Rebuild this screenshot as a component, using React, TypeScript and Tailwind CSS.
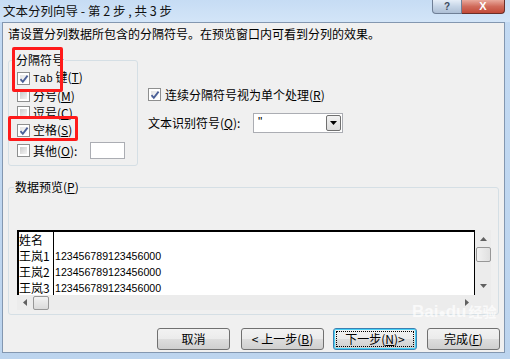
import React from "react";

// ─── Small pieces ─────────────────────────────────────────────────────────────

function CheckBox({ on }: { on?: boolean }) {
  return (
    <span className="relative w-[13px] h-[13px] shrink-0 border border-[#8e8f8f] bg-white p-[2px] flex">
      <span
        className={
          on
            ? "flex-1 bg-gradient-to-br from-[#e4e4e4] to-[#fbfbfb]"
            : "flex-1 bg-gradient-to-br from-[#cbcbcb] to-[#f4f4f4]"
        }
      />
      {on && (
        <svg className="absolute left-[1px] top-[1px]" width="10" height="10" viewBox="0 0 10 10">
          <path d="M1.5 5.2 L3.8 7.8 L8.6 1.6" fill="none" stroke="#4a5f97" strokeWidth="1.8" />
        </svg>
      )}
    </span>
  );
}

function Key({ k }: { k: string }) {
  return (
    <span>
      (<span className="underline underline-offset-1">{k}</span>)
    </span>
  );
}

function Opt({ on, label, k, h }: { on?: boolean; label: React.ReactNode; k: string; h: string }) {
  return (
    <div className={`flex items-center gap-[3px] ${h}`}>
      <CheckBox on={on} />
      <span className="leading-[14px]">
        {label}
        <Key k={k} />
      </span>
    </div>
  );
}

function Btn({
  w,
  children,
  primary,
}: {
  w: string;
  children: React.ReactNode;
  primary?: boolean;
}) {
  return (
    <div
      className={`${w} h-[22px] rounded-[3px] border ${
        primary ? "border-[#3c7fb1] shadow-[inset_0_0_0_1px_#48d2f8]" : "border-[#707070]"
      } bg-[linear-gradient(#f2f2f2_0%,#ebebeb_50%,#dddddd_51%,#cfcfcf_100%)] flex items-center justify-center p-[2px]`}
    >
      <div
        className={`w-full h-full flex items-center justify-center ${
          primary ? "border border-dotted border-black" : ""
        }`}
      >
        {children}
      </div>
    </div>
  );
}

function Tri({ dir }: { dir: "up" | "down" | "left" | "right" }) {
  const pts = {
    up: "0,4 3.5,0 7,4",
    down: "0,0 3.5,4 7,0",
    left: "4,0 0,3.5 4,7",
    right: "0,0 4,3.5 0,7",
  }[dir];
  const vert = dir === "up" || dir === "down";
  return (
    <svg width={vert ? 7 : 4} height={vert ? 4 : 7} viewBox={vert ? "0 0 7 4" : "0 0 4 7"}>
      <polygon points={pts} fill="#606060" />
    </svg>
  );
}

// ─── Data ─────────────────────────────────────────────────────────────────────

const rows = [
  ["姓名", ""],
  ["王岚1", "123456789123456000"],
  ["王岚2", "123456789123456000"],
  ["王岚3", "123456789123456000"],
];

// ─── App ──────────────────────────────────────────────────────────────────────

export default function App() {
  return (
    <div className="relative w-[510px] h-[359px] overflow-hidden flex flex-col bg-[linear-gradient(#c3daf3,#bcd4ee)] text-[12px] text-black font-['Noto_Sans_CJK_SC','Noto_Sans',sans-serif]">
      {/* Title bar */}
      <div className="h-[22px] shrink-0 flex items-start justify-between bg-[linear-gradient(#c6dcf4,#d3e5f8)]">
        <div className="pl-[3px] pt-[3px] leading-[15px] text-[12.5px] text-[#111] whitespace-pre">
          文本分列向导 - 第 2 步 , 共 3 步
        </div>
        <div className="flex mr-[5px]">
          <div className="w-[30px] h-[14px] rounded-bl-[4px] border border-t-0 border-[#6f7f96] bg-[linear-gradient(#e6eef8,#c5d4e6_50%,#aebfd5)] flex items-center justify-center text-[10px] font-bold text-[#3c4a5e] leading-none font-['Liberation_Sans',sans-serif]">
            ?
          </div>
          <div className="w-[43px] h-[14px] rounded-br-[4px] border border-l-0 border-t-0 border-[#6a2e28] bg-[linear-gradient(#e9a99c,#d06a5a_50%,#c24a38)] flex items-center justify-center text-[11px] font-bold text-white leading-none font-['Liberation_Sans',sans-serif]">
            X
          </div>
        </div>
      </div>

      {/* Client area */}
      <div className="ml-[2px] mr-[5px] mb-[6px] flex-1 border border-[#8397b0] bg-[#f0f0f0] flex flex-col">
        <div className="mt-[4px] ml-[5px] h-[14px] leading-[14px]">
          请设置分列数据所包含的分隔符号。在预览窗口内可看到分列的效果。
        </div>

        <div className="flex mt-[13px] ml-[5px]">
          <fieldset className="w-[130px] h-[112px] border border-[#d5dfe5] rounded-[3px]">
            <legend className="ml-[6px] px-[1px] leading-[12px]">分隔符号</legend>
            <div className="pl-[8px] pt-[3px] flex flex-col">
              <Opt on h="h-[18px]" k="T" label={<><span className="font-['Liberation_Mono',monospace] text-[11px]">Tab</span> 键</>} />
              <Opt h="h-[17px]" k="M" label="分号" />
              <Opt h="h-[17px]" k="C" label="逗号" />
              <Opt on h="h-[18px]" k="S" label="空格" />
              <div className="flex items-center gap-[3px] h-[17px] mt-[3px]">
                <CheckBox />
                <span className="leading-[14px]">
                  其他<Key k="O" />:
                </span>
                <div className="ml-[10px] w-[35px] h-[17px] bg-white border border-[#abadb3]" />
              </div>
            </div>
          </fieldset>

          <div className="ml-[10px] flex flex-col">
            <div className="mt-[32px] h-[17px] flex items-center gap-[4px]">
              <CheckBox on />
              <span className="leading-[14px]">
                连续分隔符号视为单个处理<Key k="R" />
              </span>
            </div>
            <div className="mt-[10px] h-[20px] flex items-center">
              <span className="w-[105px] leading-[14px]">
                文本识别符号<Key k="Q" />:
              </span>
              <div className="w-[90px] h-[20px] bg-white border border-[#abadb3] flex">
                <span className="flex-1 pl-[4px] leading-[16px] font-['Liberation_Sans',sans-serif]">"</span>
                <div className="w-[15px] my-[1px] mr-[1px] border border-[#707070] rounded-[2px] bg-[linear-gradient(#f2f2f2,#dcdcdc)] flex items-center justify-center">
                  <svg width="7" height="4" viewBox="0 0 7 4">
                    <polygon points="0,0 3.5,4 7,0" fill="#000" />
                  </svg>
                </div>
              </div>
            </div>
          </div>
        </div>

        {/* Preview */}
        <fieldset className="mt-[15px] ml-[5px] w-[491px] h-[134px] border border-[#d5dfe5] rounded-[3px]">
          <legend className="ml-[5px] px-[1px] leading-[12px]">
            数据预览<Key k="P" />
          </legend>
          <div className="mt-[37px] ml-[8px] w-[474px] h-[80px] grid grid-cols-[458px_16px] grid-rows-[65px_15px]">
            <div className="bg-white border-t-2 border-l-2 border-r border-black overflow-hidden">
              {rows.map(([a, b], i) => (
                <div key={i} className="flex h-[16px] leading-[16px]">
                  <div className="w-[35px] border-r border-black">{a}</div>
                  <div className="pl-[1px] font-['Liberation_Sans',sans-serif] text-[10.6px]">{b}</div>
                </div>
              ))}
            </div>
            <div className="bg-[#ececec] flex flex-col items-center">
              <div className="h-[17px] flex items-center">
                <Tri dir="up" />
              </div>
              <div className="w-[15px] h-[15px] rounded-[2px] border border-[#979797] bg-[linear-gradient(90deg,#f2f2f2,#e0e0e0)]" />
              <div className="flex-1" />
              <div className="h-[18px] flex items-center">
                <Tri dir="down" />
              </div>
            </div>
            <div className="bg-[#ececec] flex items-center">
              <div className="w-[16px] flex justify-center">
                <Tri dir="left" />
              </div>
              <div className="w-[16px] h-[14px] rounded-[2px] border border-[#979797] bg-[linear-gradient(#f2f2f2,#dadada)]" />
              <div className="flex-1" />
              <div className="w-[17px] flex justify-center">
                <Tri dir="right" />
              </div>
            </div>
            <div className="bg-[#ececec]" />
          </div>
        </fieldset>

        {/* Buttons */}
        <div className="mt-[13px] flex justify-end pr-[4px]">
          <Btn w="w-[73px]">取消</Btn>
          <div className="ml-[11px]">
            <Btn w="w-[83px]">
              &lt; 上一步<Key k="B" />
            </Btn>
          </div>
          <div className="ml-[9px]">
            <Btn w="w-[84px]" primary>
              下一步<Key k="N" /> &gt;
            </Btn>
          </div>
          <div className="ml-[10px]">
            <Btn w="w-[73px]">
              完成<Key k="F" />
            </Btn>
          </div>
        </div>
      </div>

      {/* Annotation boxes */}
      <div className="absolute left-[12px] top-[47px] w-[51px] h-[45px] border-[3px] border-[#ff1a1a] rounded-[2px]" />
      <div className="absolute left-[8px] top-[116px] w-[70px] h-[25px] border-[3px] border-[#ff1a1a] rounded-[2px]" />

      {/* Watermark */}
      <div className="absolute left-[412px] top-[301px] text-white/70 pointer-events-none font-['Liberation_Sans',sans-serif] text-[17px] font-bold leading-[20px] whitespace-nowrap">
        Bai<span className="text-[12px]">●</span>du<span className="ml-[2px] font-['Noto_Sans_CJK_SC',sans-serif] text-[14px]">经验</span>
      </div>
    </div>
  );
}
